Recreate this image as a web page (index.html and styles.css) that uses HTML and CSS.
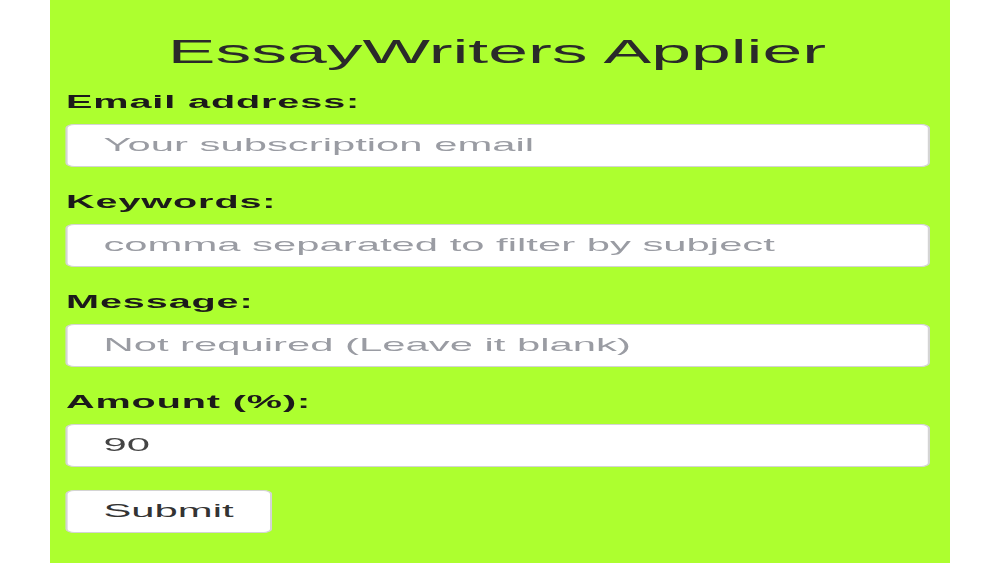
FILE: index.html
```html
<!DOCTYPE html>
<html lang="en">
<head>
  <meta charset="UTF-8">
  <meta name="viewport" content="width=device-width, initial-scale=1.0">
  <title>EssayWriters Applier</title>
  <link rel="stylesheet" href="styles.css">
</head>
<body>
  <div class="panel">
    <form class="applier-form" onsubmit="return false;">
      <h1>EssayWriters Applier</h1>

      <label for="email">Email address:</label>
      <input type="email" id="email" placeholder="Your subscription email">

      <label for="keywords">Keywords:</label>
      <input type="text" id="keywords" placeholder="comma separated to filter by subject">

      <label for="message">Message:</label>
      <input type="text" id="message" placeholder="Not required (Leave it blank)">

      <label for="amount">Amount (%):</label>
      <input type="text" id="amount" value="90">

      <button type="submit" class="submit-button">Submit</button>
    </form>
  </div>
</body>
</html>
```

FILE: styles.css
```css
body {
  margin: 0;
  background: #fff;
  font-family: 'Liberation Sans', Arial, sans-serif;
}

.panel {
  width: 900px;
  min-height: 100vh;
  margin: 0 auto;
  background: #adff2f;
  overflow: hidden;
}

.applier-form {
  display: flex;
  flex-direction: column;
  align-items: flex-start;
  width: 409px;
  box-sizing: border-box;
  padding: 32px 9.5px 0 6.8px;
  transform: scaleX(2.2);
  transform-origin: left top;
}

h1 {
  align-self: stretch;
  margin: 0 0 20px;
  font-size: 32.5px;
  line-height: 40px;
  font-weight: normal;
  text-align: center;
  color: #2a2a2a;
}

label {
  margin-left: 0.5px;
  font-size: 18px;
  line-height: 20px;
  font-weight: bold;
  letter-spacing: 0.4px;
  color: #1c1a1a;
}

input {
  align-self: stretch;
  box-sizing: border-box;
  height: 43px;
  margin: 11.6px 0 25.4px;
  padding: 0 10px 0 16.5px;
  font-family: inherit;
  font-size: 19px;
  color: #444;
  background: #fff;
  border: 1px solid #d4d4d4;
  border-radius: 4px;
  outline: none;
}

input::placeholder {
  color: #9a9ca3;
}

.submit-button {
  box-sizing: border-box;
  width: 94px;
  height: 43px;
  margin-top: -2.4px;
  padding: 0 0 0 16.5px;
  text-align: left;
  font-family: inherit;
  font-size: 19px;
  color: #333;
  background: #fff;
  border: 1px solid #d4d4d4;
  border-radius: 4px;
  cursor: pointer;
}
```
